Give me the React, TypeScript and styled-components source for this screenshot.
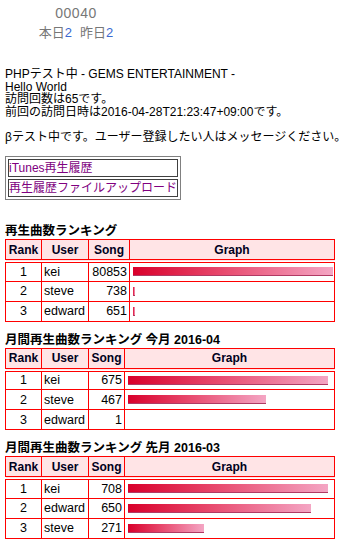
import React from "react";
import styled, { createGlobalStyle } from "styled-components";

const Global = createGlobalStyle`
  html, body { margin: 0; padding: 0; background: #fff; }
  body {
    font-family: "Liberation Sans", "Noto Sans CJK JP", sans-serif;
    font-size: 12px;
    color: #000;
  }
`;

const Page = styled.div`
  padding: 4px 5px 10px 5px;
  width: 336px;
  box-sizing: border-box;
`;

const Counter = styled.div`
  width: 140px;
  display: flex;
  flex-direction: column;
  align-items: center;
  color: #777;
  padding-left: 1px;
`;

const CountNum = styled.div`
  font-size: 14px;
  line-height: 18px;
  letter-spacing: 0.5px;
`;

const CountDays = styled.div`
  font-size: 13px;
  line-height: 21px;
  display: flex;
  gap: 8px;
`;

const Blue = styled.span`
  color: #3a68d0;
`;

const Intro = styled.div`
  margin-top: 25px;
  line-height: 12.5px;
  font-size: 12px;
`;

const Beta = styled.p`
  margin: 12px 0 12px;
  line-height: 14px;
  white-space: nowrap;
`;

const LinkTable = styled.table`
  border: 1px solid #808080;
  border-spacing: 2px;
  width: 172px;
`;

const LinkCell = styled.td`
  border: 1px solid #404040;
  padding: 0;
  line-height: 16px;
  white-space: nowrap;
`;

const Link = styled.a`
  color: #800080;
  text-decoration: none;
`;

const Heading = styled.h3`
  font-size: 12.5px;
  font-weight: bold;
  margin: 0;
  line-height: 14px;
  color: #000;
  white-space: nowrap;
`;

const Section = styled.section<{ $top: number }>`
  margin-top: ${(p) => p.$top}px;
`;

const RankTable = styled.table`
  width: 330px;
  table-layout: fixed;
  border-collapse: collapse;
  border: 1px solid #f00;
  margin-top: 1px;
`;

const Col = styled.col<{ $w: number }>`
  width: ${(p) => p.$w}px;
`;

const Th = styled.th`
  border: 1px solid #f00;
  border-bottom: 4px double #f00;
  background: #ffe4e6;
  font-weight: bold;
  font-size: 12px;
  color: #000020;
  height: 19px;
  padding: 0;
  text-align: center;
`;

const Td = styled.td<{ $align: "left" | "center" | "right" }>`
  border: 1px solid #f00;
  height: 20px;
  padding: 0 2px;
  text-align: ${(p) => p.$align};
  font-size: 12.5px;
  white-space: nowrap;
  box-sizing: border-box;
`;

const GraphTd = styled.td`
  border: 1px solid #f00;
  height: 20px;
  padding: 0 3px;
  box-sizing: border-box;
`;

const Bar = styled.div`
  height: 9px;
  box-sizing: border-box;
  background: linear-gradient(to right, #d9002b, #e84a6e 45%, #f4a6c4);
  border-bottom: 1px solid #b03a64;
`;

type Row = { rank: number; user: string; song: number };

const data: { title: string; top: number; songW: number; rows: Row[] }[] = [
  {
    title: "再生曲数ランキング",
    top: 24,
    songW: 41,
    rows: [
      { rank: 1, user: "kei", song: 80853 },
      { rank: 2, user: "steve", song: 738 },
      { rank: 3, user: "edward", song: 651 },
    ],
  },
  {
    title: "月間再生曲数ランキング 今月 2016-04",
    top: 11,
    songW: 36,
    rows: [
      { rank: 1, user: "kei", song: 675 },
      { rank: 2, user: "steve", song: 467 },
      { rank: 3, user: "edward", song: 1 },
    ],
  },
  {
    title: "月間再生曲数ランキング 先月 2016-03",
    top: 11,
    songW: 36,
    rows: [
      { rank: 1, user: "kei", song: 708 },
      { rank: 2, user: "edward", song: 650 },
      { rank: 3, user: "steve", song: 271 },
    ],
  },
];

const Ranking = ({ title, top, songW, rows }: (typeof data)[number]) => {
  const max = Math.max(...rows.map((r) => r.song));
  return (
    <Section $top={top}>
      <Heading>{title}</Heading>
      <RankTable>
        <colgroup>
          <Col $w={36} />
          <Col $w={47} />
          <Col $w={songW} />
          <col />
        </colgroup>
        <thead>
          <tr>
            <Th>Rank</Th>
            <Th>User</Th>
            <Th>Song</Th>
            <Th>Graph</Th>
          </tr>
        </thead>
        <tbody>
          {rows.map((r) => {
            const w = Math.floor((r.song / max) * 200);
            return (
              <tr key={r.rank}>
                <Td $align="center">{r.rank}</Td>
                <Td $align="left">{r.user}</Td>
                <Td $align="right">{r.song}</Td>
                <GraphTd>{w > 0 && <Bar style={{ width: `${Math.max(w, 2)}px` }} />}</GraphTd>
              </tr>
            );
          })}
        </tbody>
      </RankTable>
    </Section>
  );
};

export default function App() {
  return (
    <Page>
      <Global />
      <Counter>
        <CountNum>00040</CountNum>
        <CountDays>
          <span>
            本日<Blue>2</Blue>
          </span>
          <span>
            昨日<Blue>2</Blue>
          </span>
        </CountDays>
      </Counter>
      <Intro>
        PHPテスト中 - GEMS ENTERTAINMENT -<br />
        Hello World
        <br />
        訪問回数は65です。
        <br />
        前回の訪問日時は2016-04-28T21:23:47+09:00です。
      </Intro>
      <Beta>βテスト中です。ユーザー登録したい人はメッセージください。</Beta>
      <LinkTable>
        <tbody>
          <tr>
            <LinkCell>
              <Link href="#">iTunes再生履歴</Link>
            </LinkCell>
          </tr>
          <tr>
            <LinkCell>
              <Link href="#">再生履歴ファイルアップロード</Link>
            </LinkCell>
          </tr>
        </tbody>
      </LinkTable>
      {data.map((d) => (
        <Ranking key={d.title} {...d} />
      ))}
    </Page>
  );
}
